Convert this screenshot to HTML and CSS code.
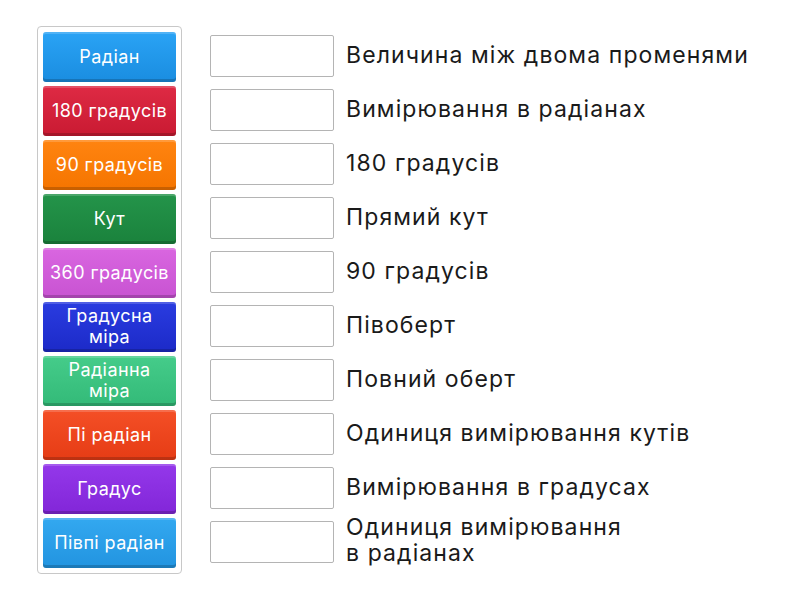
FILE: index.html
```html
<!DOCTYPE html>
<html lang="uk">
<head>
<meta charset="utf-8">
<link rel="stylesheet" href="styles.css">
</head>
<body>
<div class="page">
  <div class="tiles">
    <div class="tile c1">Радіан</div>
    <div class="tile c2">180 градусів</div>
    <div class="tile c3">90 градусів</div>
    <div class="tile c4">Кут</div>
    <div class="tile c5">360 градусів</div>
    <div class="tile c6">Градусна міра</div>
    <div class="tile c7">Радіанна міра</div>
    <div class="tile c8">Пі радіан</div>
    <div class="tile c9">Градус</div>
    <div class="tile c10">Півпі радіан</div>
  </div>
  <div class="rows">
    <div class="row"><div class="box"></div><div class="label">Величина між двома променями</div></div>
    <div class="row"><div class="box"></div><div class="label">Вимірювання в радіанах</div></div>
    <div class="row"><div class="box"></div><div class="label">180 градусів</div></div>
    <div class="row"><div class="box"></div><div class="label">Прямий кут</div></div>
    <div class="row"><div class="box"></div><div class="label">90 градусів</div></div>
    <div class="row"><div class="box"></div><div class="label">Півоберт</div></div>
    <div class="row"><div class="box"></div><div class="label">Повний оберт</div></div>
    <div class="row"><div class="box"></div><div class="label">Одиниця вимірювання кутів</div></div>
    <div class="row"><div class="box"></div><div class="label">Вимірювання в градусах</div></div>
    <div class="row"><div class="box"></div><div class="label narrow">Одиниця вимірювання в радіанах</div></div>
  </div>
</div>
</body>
</html>
```

FILE: styles.css
```css
html, body {
  margin: 0;
  padding: 0;
  background: #fff;
}
.page {
  display: flex;
  align-items: flex-start;
  padding: 26px 0 0 37px;
  font-family: Inter, "Noto Sans", sans-serif;
}
.tiles {
  width: 133px;
  padding: 5px;
  border: 1px solid #c8c8c8;
  border-radius: 4px;
  display: flex;
  flex-direction: column;
  gap: 4px;
}
.tile {
  height: 50px;
  box-sizing: border-box;
  border-radius: 3px;
  display: flex;
  align-items: center;
  justify-content: center;
  text-align: center;
  color: #fff;
  font-size: 18px;
  letter-spacing: 0.4px;
  line-height: 21px;
  padding: 0 5px 2px;
  box-shadow: inset 0 -3px 0 rgba(0,0,0,0.18), inset 0 2px 0 rgba(255,255,255,0.18);
}
.c1 { background: linear-gradient(#2aa3f5, #1a8de0); }
.c2 { background: linear-gradient(#de2a44, #c91a32); }
.c3 { background: linear-gradient(#ff8410, #f57500); }
.c4 { background: linear-gradient(#24944a, #1a823c); }
.c5 { background: linear-gradient(#d966e0, #c853d2); }
.c6 { background: linear-gradient(#2a3ce0, #1c2ac8); }
.c7 { background: linear-gradient(#45cc8a, #33ba78); }
.c8 { background: linear-gradient(#f44f26, #e63c15); }
.c9 { background: linear-gradient(#9438ea, #8226d8); }
.c10 { background: linear-gradient(#33a8f0, #2294e0); }
.rows {
  margin-left: 28px;
  padding-top: 6px;
  display: flex;
  flex-direction: column;
  gap: 4px;
}
.row {
  height: 50px;
  display: flex;
  align-items: center;
}
.box {
  width: 122px;
  height: 40px;
  border: 1px solid #b4b4b4;
  border-radius: 2px;
  background: #fff;
  flex: none;
  margin-top: -2px;
}
.label {
  margin-left: 12px;
  font-size: 23px;
  letter-spacing: 1.1px;
  line-height: 26px;
  color: #1a1a1a;
  margin-top: -4px;
}
.narrow {
  width: 285px;
  margin-top: -6px;
}
```
